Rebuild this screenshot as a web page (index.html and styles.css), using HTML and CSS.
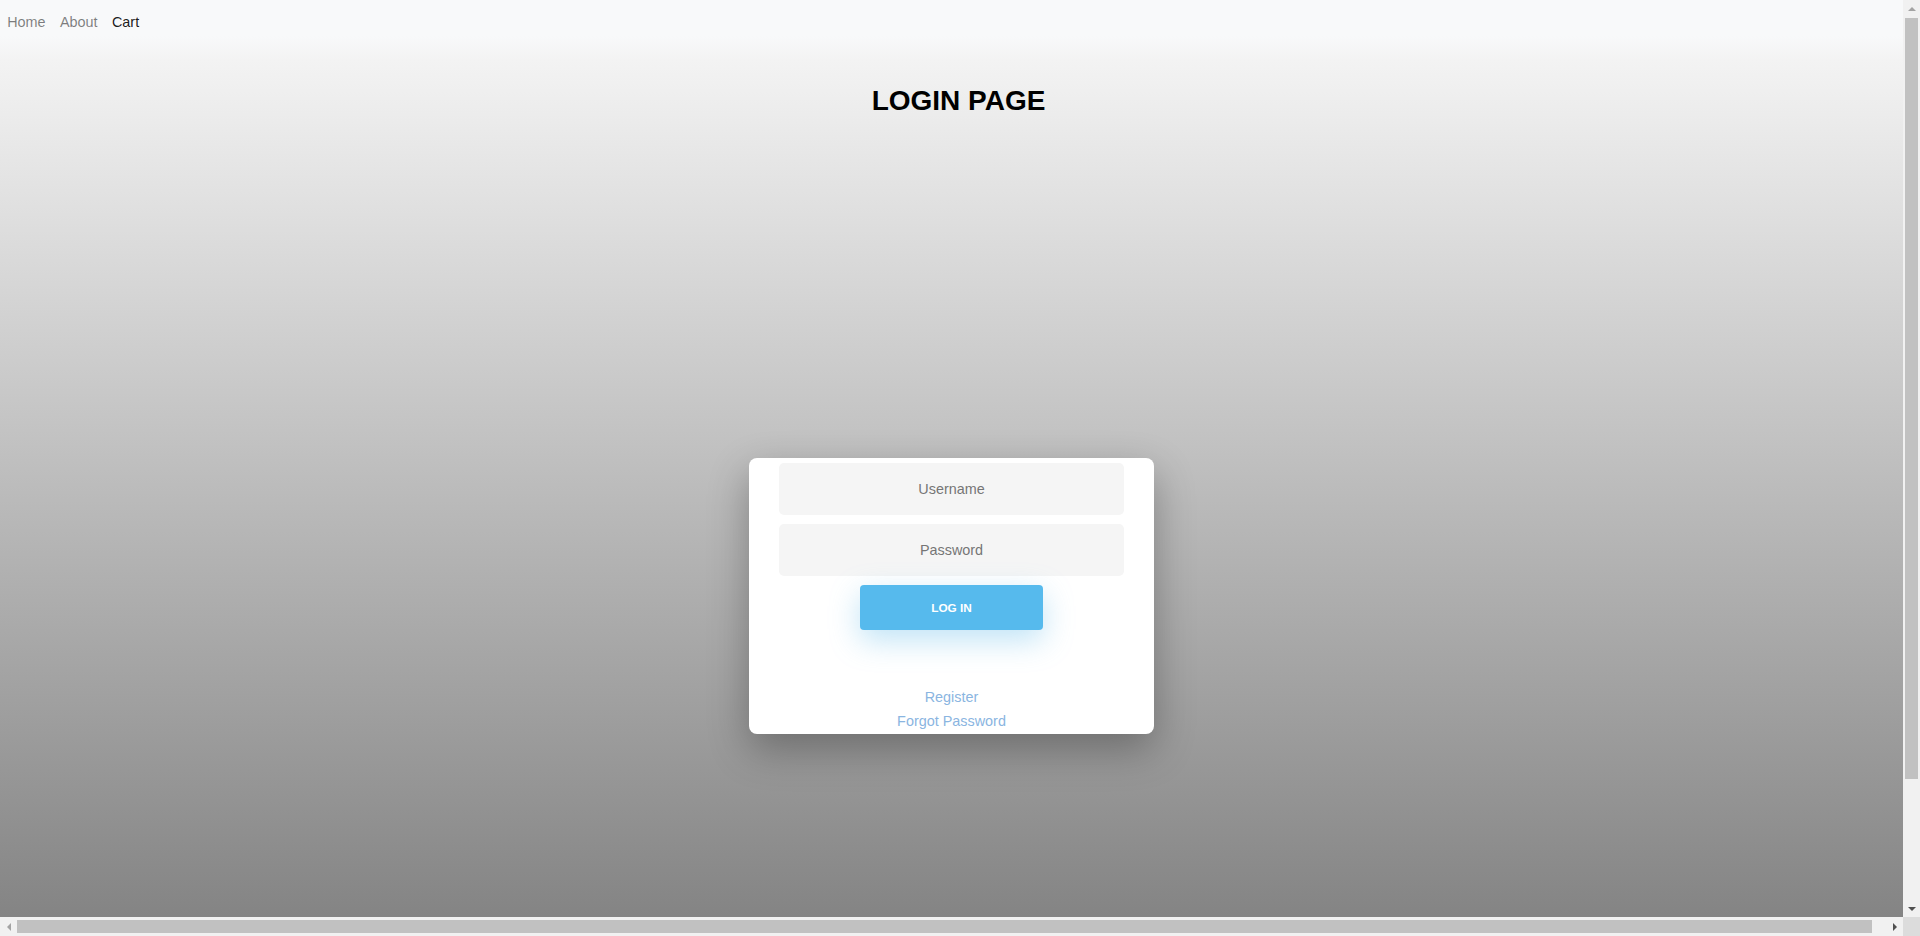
FILE: index.html
```html
<!DOCTYPE html>
<html lang="en">
<head>
<meta charset="utf-8">
<title>Login Page</title>
<link rel="stylesheet" href="styles.css">
</head>
<body>
<div class="window">
  <div class="viewport">
    <div class="page">
      <nav class="navbar">
        <a class="nav-link" href="#">Home</a>
        <a class="nav-link" href="#">About</a>
        <a class="nav-link active" href="#">Cart</a>
      </nav>
      <h1 class="title">LOGIN PAGE</h1>
      <div class="card-row">
        <form class="card">
          <input class="field" type="text" placeholder="Username">
          <input class="field" type="password" placeholder="Password">
          <button class="btn" type="button">LOG IN</button>
          <div class="links">
            <a class="link" href="#">Register</a>
            <a class="link" href="#">Forgot Password</a>
          </div>
        </form>
      </div>
    </div>
  </div>
  <div class="vscroll">
    <div class="sb-btn"><span class="arrow arrow-up"></span></div>
    <div class="vthumb"></div>
    <div class="sb-fill"></div>
    <div class="sb-btn"><span class="arrow arrow-down"></span></div>
  </div>
  <div class="hscroll">
    <div class="sb-btn"><span class="arrow arrow-left"></span></div>
    <div class="hthumb"></div>
    <div class="sb-fill"></div>
    <div class="sb-btn"><span class="arrow arrow-right"></span></div>
  </div>
  <div class="corner"></div>
</div>
</body>
</html>
```
FILE: styles.css
```css
html, body {
  margin: 0;
  padding: 0;
}
body {
  font-family: "Liberation Sans", Arial, sans-serif;
  background: #f1f1f1;
  overflow: hidden;
}
.window {
  display: grid;
  grid-template-columns: 1903px 17px;
  grid-template-rows: 917px 19px;
  width: 1920px;
  height: 936px;
}
.viewport {
  overflow: hidden;
}
.page {
  height: 1090px;
  background: linear-gradient(to bottom, #f8f9fa 0px, #f8f9fa 36px, #f3f3f3 60px, #848484 917px, #6f6f6f 1090px);
}
.navbar {
  display: flex;
  padding: 11px 0 0 0;
  height: 33px;
}
.nav-link {
  font-size: 14.4px;
  line-height: 22px;
  padding: 0 7.2px;
  color: rgba(0, 0, 0, 0.5);
  text-decoration: none;
}
.nav-link.active {
  color: rgba(0, 0, 0, 0.9);
}
.title {
  width: 1917px;
  margin: 41px 0 0 0;
  font-size: 28px;
  line-height: 32px;
  font-weight: bold;
  text-align: center;
  color: #000;
}
.card-row {
  display: flex;
  justify-content: center;
  padding-top: 341px;
}
.card {
  width: 345px;
  padding: 5px 30px 1px;
  background: #fff;
  border-radius: 8px;
  box-shadow: 0 15px 40px rgba(0, 0, 0, 0.3);
  display: flex;
  flex-direction: column;
  align-items: center;
}
.field {
  display: block;
  box-sizing: border-box;
  width: 345px;
  height: 52px;
  margin: 0 0 9px 0;
  border: none;
  border-radius: 5px;
  background: #f5f5f5;
  font-family: "Liberation Sans", Arial, sans-serif;
  font-size: 14.4px;
  text-align: center;
  color: #333;
  outline: none;
}
.field::placeholder {
  color: #757575;
}
.btn {
  width: 183px;
  height: 45px;
  border: none;
  border-radius: 4px;
  background: #56baed;
  color: #fff;
  font-family: "Liberation Sans", Arial, sans-serif;
  font-size: 11.8px;
  font-weight: bold;
  box-shadow: 0 10px 30px rgba(95, 186, 233, 0.4);
}
.links {
  margin-top: 55px;
  display: flex;
  flex-direction: column;
  align-items: center;
}
.link {
  font-size: 14.4px;
  line-height: 24px;
  color: #8ab5e1;
  text-decoration: none;
}

/* scrollbars */
.vscroll {
  display: flex;
  flex-direction: column;
  background: #f1f1f1;
}
.hscroll {
  display: flex;
  background: #f1f1f1;
}
.sb-btn {
  flex: 0 0 17px;
  height: 17px;
  display: flex;
  align-items: center;
  justify-content: center;
}
.hscroll .sb-btn {
  height: 19px;
}
.sb-fill {
  flex: 1;
}
.vthumb {
  height: 761px;
  margin: 1px 2px 0;
  background: #c1c1c1;
}
.hthumb {
  width: 1855px;
  height: 13px;
  margin: 3px 0;
  background: #c1c1c1;
}
.corner {
  background: #dcdcdc;
}
.arrow {
  width: 0;
  height: 0;
}
.arrow-up {
  border-left: 4px solid transparent;
  border-right: 4px solid transparent;
  border-bottom: 4px solid #a3a3a3;
}
.arrow-down {
  border-left: 4px solid transparent;
  border-right: 4px solid transparent;
  border-top: 4px solid #505050;
}
.arrow-left {
  border-top: 4px solid transparent;
  border-bottom: 4px solid transparent;
  border-right: 4px solid #a3a3a3;
}
.arrow-right {
  border-top: 4px solid transparent;
  border-bottom: 4px solid transparent;
  border-left: 4px solid #505050;
}
```
